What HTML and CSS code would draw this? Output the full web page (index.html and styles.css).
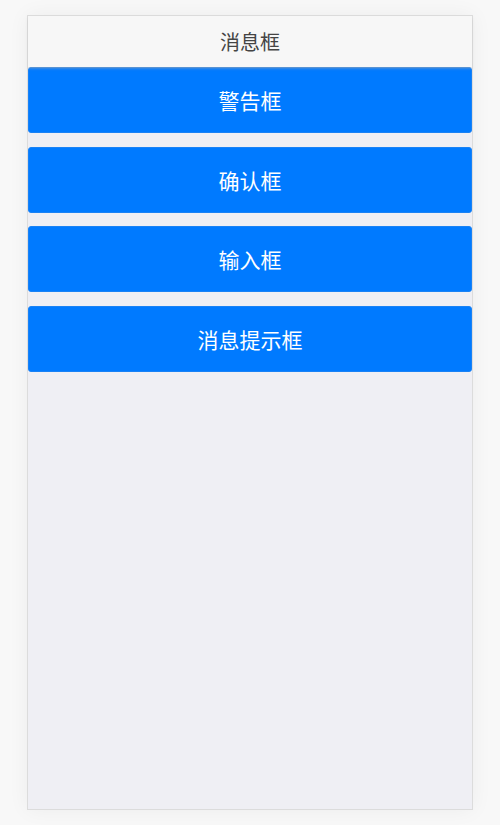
FILE: index.html
```html
<!doctype html>
<html lang='zh-CN'>
  <head>
    <title>消息框</title>
    <meta charset='UTF-8'>
    <meta name='viewport' content='width=device-width, initial-scale=1'>
    <link rel="stylesheet" href="styles.css">
  </head>
  <body>
<main class=phone>
  <header class=bar>消息框</header>
  <section class=list>
    <button class=btn type=button>警告框</button>
    <button class=btn type=button>确认框</button>
    <button class=btn type=button>输入框</button>
    <button class=btn type=button>消息提示框</button>
  </section>
</main>
  </body>
</html>
```

FILE: styles.css
```css
html, body {
  margin: 0;
  height: 100%;
  font-family: "Noto Sans CJK SC", "Liberation Sans", sans-serif;
}
body {
  background: #f8f8f8;
  padding: 15px 27px 16px;
  box-sizing: border-box;
}
.phone {
  height: 793px;
  border: 1px solid #dcdcdc;
  background: #efeff4;
  box-shadow: 0 0 20px rgba(0, 0, 0, 0.05);
  display: flex;
  flex-direction: column;
}
.bar {
  height: 51px;
  flex: none;
  background: #f7f7f7;
  color: #444;
  font-size: 20px;
  display: flex;
  align-items: center;
  justify-content: center;
  position: relative;
  z-index: 1;
  box-shadow: 0 2px 3px -1px rgba(170, 170, 170, 0.7);
}
.list {
  display: flex;
  flex-direction: column;
  gap: 13.5px;
}
.btn {
  height: 66px;
  border: 1px solid #1a82f5;
  border-radius: 3px;
  background: #007aff;
  color: #fff;
  font: inherit;
  font-size: 21px;
  padding: 0;
}
```
